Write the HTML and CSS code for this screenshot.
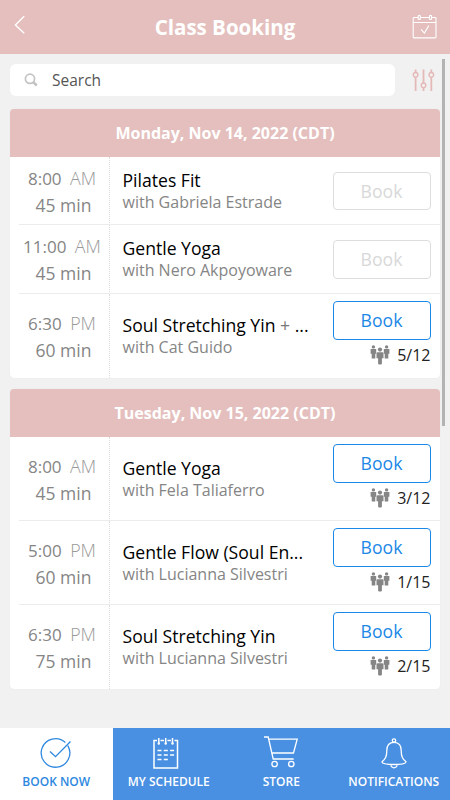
FILE: index.html
```
<!DOCTYPE html>
<html lang="en">
<head>
    <meta charset="UTF-8">
    <meta name="viewport" content="width=device-width, initial-scale=1.0">
    <title>Class Booking</title>
    <link rel="stylesheet" href="styles.css">
</head>
<body>
    <!-- Shared icon for spots taken -->
    <svg class="sprite" width="0" height="0">
        <symbol id="people" viewBox="0 0 20 20">
            <circle cx="3.4" cy="1.9" r="1.7"/>
            <path d="M.6 4.1h5.6v4.7h-.9v4.8H1.7V8.8H.6z"/>
            <circle cx="16.6" cy="1.9" r="1.7"/>
            <path d="M13.8 4.1h5.6v4.7h-1.1v4.8h-3.6V8.8h-.9z"/>
            <circle cx="10" cy="4.6" r="2.1"/>
            <path d="M7.4 7.3h5.2q.9 0 .9 1v4.9h-1.6v5.2q0 1.1-1.1 1.1H9.2q-1.1 0-1.1-1.1v-5.2H6.5V8.300q0-1 .9-1z"/>
        </symbol>
    </svg>

    <div class="app">
        <header class="top-bar">
            <svg class="back-icon" width="12" height="20" viewBox="0 0 12 20"><path d="M10.200 1.200L1.400 9.900l8.800 8.400"/></svg>
            <h1 class="page-title">Class Booking</h1>
            <svg class="calendar-icon" width="26" height="26" viewBox="0 0 26 26">
                <path d="M6 3.500H2q-.8 0-.8.8v18.800q0 .8.8.8h21.200q.8 0 .8-.8V4.300q0-.8-.8-.8H20M8.600 3.500h8.500M1.200 8.500H24M9 15.300l3.400 3.700 4.400-7.400"/>
                <rect x="6.200" y="1.400" width="2.200" height="4" rx="1"/>
                <rect x="17.400" y="1.400" width="2.200" height="4" rx="1"/>
            </svg>
        </header>

        <main class="content">
            <div class="search-row">
                <div class="search-box">
                    <svg class="search-icon" width="15" height="15" viewBox="0 0 15 15"><circle cx="6" cy="5.800" r="4.600"/><path d="M9.400 9.300l3.400 3.200"/></svg>
                    <span>Search</span>
                </div>
                <svg class="filter-icon" width="23" height="23" viewBox="0 0 23 23">
                    <path d="M3.600.5v3M3.600 8v14M11.500.5v13.500M11.500 19v3M19.300.5v3M19.300 8v14"/>
                    <circle cx="3.600" cy="5.800" r="2.300"/><circle cx="11.500" cy="16.300" r="2.300"/><circle cx="19.300" cy="5.800" r="2.300"/>
                </svg>
            </div>

            <section class="day">
                <h2 class="day-title">Monday, Nov 14, 2022 (CDT)</h2>
                <div class="class-row">
                    <div class="time"><div>8:00 <span class="period">AM</span></div><div class="length">45 min</div></div>
                    <div class="details"><div class="name">Pilates Fit</div><div class="teacher">with Gabriela Estrade</div></div>
                    <div class="action"><button class="book-btn" disabled>Book</button></div>
                </div>
                <div class="class-row">
                    <div class="time"><div>11:00 <span class="period">AM</span></div><div class="length">45 min</div></div>
                    <div class="details"><div class="name">Gentle Yoga</div><div class="teacher">with Nero Akpoyoware</div></div>
                    <div class="action"><button class="book-btn" disabled>Book</button></div>
                </div>
                <div class="class-row open">
                    <div class="time"><div>6:30 <span class="period">PM</span></div><div class="length">60 min</div></div>
                    <div class="details"><div class="name">Soul Stretching Yin <span class="plus">+</span> ...</div><div class="teacher">with Cat Guido</div></div>
                    <div class="action"><button class="book-btn">Book</button><div class="spots"><svg class="people-icon"><use href="#people"/></svg>5/12</div></div>
                </div>
            </section>

            <section class="day">
                <h2 class="day-title">Tuesday, Nov 15, 2022 (CDT)</h2>
                <div class="class-row open">
                    <div class="time"><div>8:00 <span class="period">AM</span></div><div class="length">45 min</div></div>
                    <div class="details"><div class="name">Gentle Yoga</div><div class="teacher">with Fela Taliaferro</div></div>
                    <div class="action"><button class="book-btn">Book</button><div class="spots"><svg class="people-icon"><use href="#people"/></svg>3/12</div></div>
                </div>
                <div class="class-row open">
                    <div class="time"><div>5:00 <span class="period">PM</span></div><div class="length">60 min</div></div>
                    <div class="details"><div class="name">Gentle Flow (Soul En...</div><div class="teacher">with Lucianna Silvestri</div></div>
                    <div class="action"><button class="book-btn">Book</button><div class="spots"><svg class="people-icon"><use href="#people"/></svg>1/15</div></div>
                </div>
                <div class="class-row open">
                    <div class="time"><div>6:30 <span class="period">PM</span></div><div class="length">75 min</div></div>
                    <div class="details"><div class="name">Soul Stretching Yin</div><div class="teacher">with Lucianna Silvestri</div></div>
                    <div class="action"><button class="book-btn">Book</button><div class="spots"><svg class="people-icon"><use href="#people"/></svg>2/15</div></div>
                </div>
            </section>
            <div class="scroll-thumb"></div>
        </main>

        <nav class="tab-bar">
            <a class="tab active">
                <svg width="36" height="34" viewBox="-1 -1 36 34"><path d="M28.800 8.600A14.300 14.300 0 1 1 26.300 5.500M11 14.500l5.500 5.200L31.500 4.500"/></svg>
                <span>BOOK NOW</span>
            </a>
            <a class="tab">
                <svg width="36" height="34" viewBox="3.500 0 36 34" class="schedule-icon">
                    <path d="M9.500 4.500H6.500v27.500h23.500V4.500h-3M13 4.500h3.500M20 4.500h3.500M11.300 2v6M18.200 2v6M25 2v6"/>
                    <path d="M10 14.500h4M16.300 14.500h4M22.600 14.500h4M10 19h4M16.300 19h4M22.600 19h4M10 23.500h4M16.300 23.500h4"/>
                    <path class="dots" d="M11.300 7.500v.1M18.200 7.500v.1M25 7.500v.1"/>
                </svg>
                <span>MY SCHEDULE</span>
            </a>
            <a class="tab">
                <svg width="36" height="34" viewBox="0 0 36 34"><path d="M1 1h4.200l5 22h20.500M6 3.200h28.200L30.500 17H9"/><circle cx="11.600" cy="28" r="2.700"/><circle cx="28.300" cy="28" r="2.700"/></svg>
                <span>STORE</span>
            </a>
            <a class="tab">
                <svg width="36" height="34" viewBox="0 -.5 36 34"><path d="M18 5.800C12.800 5.800 10.800 9.500 10.800 14c0 6.500-1.500 8.500-4.800 11.200 0 1.800 5 2.800 12 2.800s12-1 12-2.800c-3.300-2.700-4.800-4.700-4.800-11.200 0-4.500-2-8.200-7.200-8.200zM14.900 28.200a3.100 3.100 0 1 0 6.200 0"/><circle cx="18" cy="4" r="1.700"/></svg>
                <span>NOTIFICATIONS</span>
            </a>
        </nav>
    </div>
</body>
</html>
```
FILE: styles.css
```
* {
    margin: 0;
    padding: 0;
    box-sizing: border-box;
}

body {
    font-family: "Open Sans", sans-serif;
    background: #f1f1f1;
    overflow: hidden;
}

svg {
    display: block;
    fill: none;
    stroke: currentColor;
}

.sprite {
    position: absolute;
}

.app {
    width: 450px;
    height: 800px;
    display: flex;
    flex-direction: column;
}

.top-bar {
    height: 54px;
    padding: 0 12px;
    display: flex;
    align-items: center;
    justify-content: space-between;
    background: #e4bfbe;
    color: #fff;
}

.back-icon {
    width: 26px;
    height: 20px;
    margin-bottom: 5px;
    stroke-width: 1.4;
    transform: translateX(-5px);
}

.page-title {
    font-size: 20.500px;
    line-height: 54px;
    font-weight: 700;
}

.calendar-icon {
    stroke-width: 1.1;
}

.content {
    position: relative;
    flex: 1;
    padding: 10px 10px 0;
}

.search-row {
    height: 32px;
    display: flex;
    align-items: center;
    gap: 16.500px;
    margin-bottom: 13px;
}

.search-box {
    width: 385px;
    height: 32px;
    padding-left: 14px;
    display: flex;
    align-items: center;
    gap: 13px;
    background: #fff;
    border-radius: 6px;
    font-size: 15.500px;
    color: #555;
}

.search-icon {
    color: #c3c3c3;
    stroke-width: 1.7;
}

.search-icon path {
    stroke-width: 2.600;
}

.filter-icon {
    flex-shrink: 0;
    color: #e4b9b8;
    stroke-width: 1.8;
}

.filter-icon circle {
    stroke-width: 1.4;
}

.day {
    margin-bottom: 11px;
    background: #fff;
    border-radius: 4px;
    overflow: hidden;
    box-shadow: 0 0 1px rgba(0, 0, 0, 0.1);
}

.day-title {
    height: 48px;
    line-height: 48px;
    background: #e4bfbe;
    color: #fff;
    font-size: 16px;
    font-weight: 700;
    text-align: center;
}

.class-row {
    position: relative;
    height: 68.300px;
    display: flex;
}

.class-row.open {
    height: 84px;
}

/* Divider starts slightly inside the card */
.class-row + .class-row::before {
    content: "";
    position: absolute;
    top: -1px;
    left: 9px;
    right: 0;
    height: 1px;
    background: #ececec;
}

.time {
    width: 100px;
    padding: 2px 4px 0 9px;
    display: flex;
    flex-direction: column;
    justify-content: center;
    border-right: 1px dotted #ddd;
    color: #858585;
    font-size: 17px;
    line-height: 26px;
    text-align: center;
    white-space: nowrap;
}

.length {
    padding-left: 3px;
    font-size: 17.500px;
}

.period {
    margin-left: 4px;
    color: #999;
    font-size: 17.800px;
    font-weight: 300;
    line-height: 1;
}

.details {
    flex: 1;
    padding-left: 12.500px;
    display: flex;
    flex-direction: column;
    justify-content: center;
    white-space: nowrap;
}

.name {
    color: #000;
    font-size: 17.600px;
    line-height: 22px;
}

.plus {
    color: #777;
}

.teacher {
    color: #858585;
    font-size: 16px;
    line-height: 22px;
}

.action {
    width: 107.500px;
    padding-right: 9.500px;
    display: flex;
    flex-direction: column;
    justify-content: center;
}

.book-btn {
    width: 98px;
    height: 38.500px;
    background: #fff;
    border: 1px solid #1b87e6;
    border-radius: 4px;
    color: #1b87e6;
    font-family: inherit;
    font-size: 17.600px;
}

.book-btn:disabled {
    border-color: #ddd;
    color: #d8d8d8;
}

.open .action {
    justify-content: flex-start;
    padding-top: 7.500px;
}

.spots {
    height: 30px;
    display: flex;
    align-items: center;
    justify-content: flex-end;
    gap: 7.500px;
    color: #222;
    font-size: 16px;
}

.people-icon {
    width: 20px;
    height: 20px;
    fill: #858585;
    stroke: none;
}

.scroll-thumb {
    position: absolute;
    top: 5px;
    right: 5px;
    width: 3px;
    height: 367px;
    background: #b3b3b3;
}

.tab-bar {
    height: 72px;
    display: grid;
    grid-template-columns: repeat(4, 1fr);
    background: #4a90e2;
}

.tab {
    padding-top: 8px;
    display: flex;
    flex-direction: column;
    align-items: center;
    color: #fff;
    font-size: 12px;
    font-weight: 600;
    line-height: 24px;
    white-space: nowrap;
}

.tab svg {
    stroke-width: 1.300;
}

.tab .schedule-icon {
    stroke-width: 1.500;
}

.tab .dots {
    stroke-width: 2.500;
    stroke-linecap: round;
}

.tab.active {
    background: #fff;
    color: #2e88e0;
}
```
